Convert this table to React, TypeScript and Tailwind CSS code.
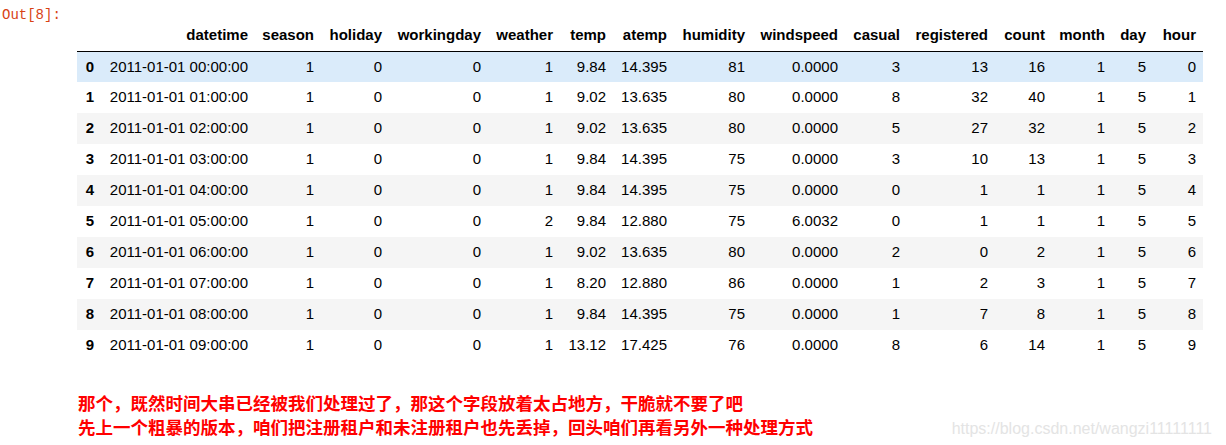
import React from "react";

const columns = [
  "datetime",
  "season",
  "holiday",
  "workingday",
  "weather",
  "temp",
  "atemp",
  "humidity",
  "windspeed",
  "casual",
  "registered",
  "count",
  "month",
  "day",
  "hour",
];

// column widths measured from the screenshot (index first)
const widths = [24, 154, 66, 68, 99, 72, 53, 61, 78, 93, 62, 88, 57, 60, 41, 50];

const rows: string[][] = [
  ["2011-01-01 00:00:00", "1", "0", "0", "1", "9.84", "14.395", "81", "0.0000", "3", "13", "16", "1", "5", "0"],
  ["2011-01-01 01:00:00", "1", "0", "0", "1", "9.02", "13.635", "80", "0.0000", "8", "32", "40", "1", "5", "1"],
  ["2011-01-01 02:00:00", "1", "0", "0", "1", "9.02", "13.635", "80", "0.0000", "5", "27", "32", "1", "5", "2"],
  ["2011-01-01 03:00:00", "1", "0", "0", "1", "9.84", "14.395", "75", "0.0000", "3", "10", "13", "1", "5", "3"],
  ["2011-01-01 04:00:00", "1", "0", "0", "1", "9.84", "14.395", "75", "0.0000", "0", "1", "1", "1", "5", "4"],
  ["2011-01-01 05:00:00", "1", "0", "0", "2", "9.84", "12.880", "75", "6.0032", "0", "1", "1", "1", "5", "5"],
  ["2011-01-01 06:00:00", "1", "0", "0", "1", "9.02", "13.635", "80", "0.0000", "2", "0", "2", "1", "5", "6"],
  ["2011-01-01 07:00:00", "1", "0", "0", "1", "8.20", "12.880", "86", "0.0000", "1", "2", "3", "1", "5", "7"],
  ["2011-01-01 08:00:00", "1", "0", "0", "1", "9.84", "14.395", "75", "0.0000", "1", "7", "8", "1", "5", "8"],
  ["2011-01-01 09:00:00", "1", "0", "0", "1", "13.12", "17.425", "76", "0.0000", "8", "6", "14", "1", "5", "9"],
];

function rowBg(i: number) {
  if (i === 0) return "bg-[#daebfa]";
  return i % 2 === 0 ? "bg-[#f5f5f5]" : "bg-white";
}

export default function App() {
  return (
    <div className="w-[1226px] h-[445px] bg-white overflow-hidden relative">
      <div className="flex">
        <div className="w-[77px] shrink-0 pl-[2px] pt-[5px] text-[14px] leading-[20px] text-[#d84315] font-['Liberation_Mono',monospace]">
          Out[8]:
        </div>
        <table className="table-fixed border-collapse mt-[20px] text-[15px] text-black font-['Liberation_Sans',Arial,sans-serif]">
          <colgroup>
            {widths.map((w, i) => (
              <col key={i} style={{ width: w }} />
            ))}
          </colgroup>
          <thead>
            <tr className="h-[31px] border-b border-black">
              <th className="px-[7px]"></th>
              {columns.map((c) => (
                <th key={c} className="px-[7px] text-right font-bold whitespace-nowrap">
                  {c}
                </th>
              ))}
            </tr>
          </thead>
          <tbody>
            {rows.map((r, i) => (
              <tr key={i} className={`h-[31px] ${rowBg(i)}`}>
                <th className="px-[7px] text-right font-bold">{i}</th>
                {r.map((v, j) => (
                  <td key={j} className="px-[7px] text-right whitespace-nowrap">
                    {v}
                  </td>
                ))}
              </tr>
            ))}
          </tbody>
        </table>
      </div>
      <div className="mt-[30px] pl-[78px] text-[17.5px] leading-[24px] font-bold text-[#ff0000] font-['Noto_Sans_CJK_SC','Noto_Sans',sans-serif]">
        <p>那个，既然时间大串已经被我们处理过了，那这个字段放着太占地方，干脆就不要了吧</p>
        <div className="flex items-baseline">
          <p>先上一个粗暴的版本，咱们把注册租户和未注册租户也先丢掉，回头咱们再看另外一种处理方式</p>
          <span className="ml-auto mr-[14px] text-[16px] font-normal text-[#e4e4e4] font-['Liberation_Sans',Arial,sans-serif]">
            https://blog.csdn.net/wangzi11111111
          </span>
        </div>
      </div>
    </div>
  );
}
